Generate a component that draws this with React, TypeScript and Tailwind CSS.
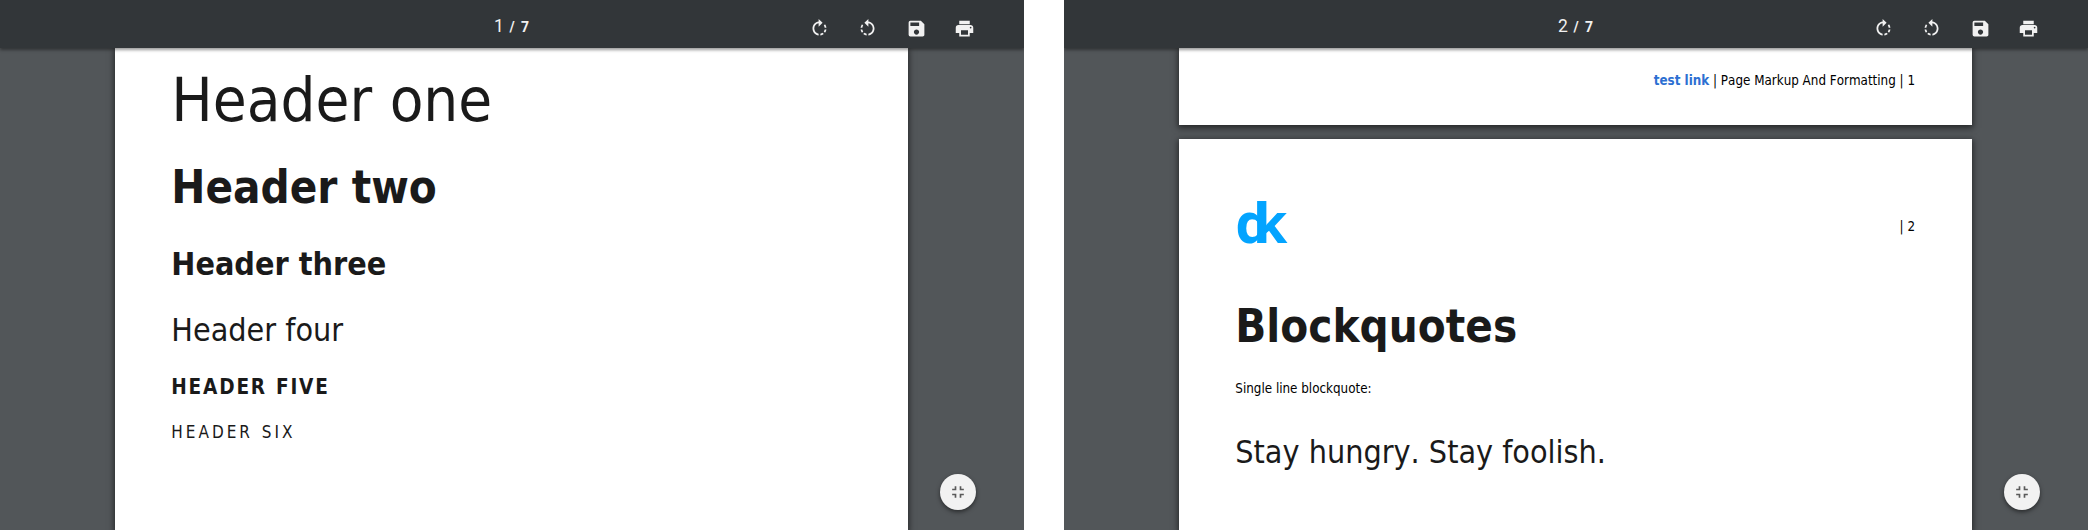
import type { ReactNode } from "react";
import { MdFullscreenExit, MdPrint, MdRotateLeft, MdRotateRight, MdSave } from "react-icons/md";

function Toolbar({ page }: { page: number }) {
  return (
    <header className="relative z-10 flex h-12 shrink-0 items-center bg-[#323639] font-[Roboto,sans-serif] text-[#f1f1f1] shadow-[0_2px_3px_rgba(0,0,0,0.4)]">
      <div className="ml-[494px] flex items-baseline pt-[4px]">
        <span className="w-[15.5px] text-[17.5px] leading-5">{page}</span>
        <span className="whitespace-pre text-[14px] leading-5 font-bold tracking-[1.4px]">/ 7</span>
      </div>
      <nav className="ml-auto mr-[49px] flex pt-[8px] text-[21px]">
        <MdRotateRight className="mr-[27px]" />
        <MdRotateLeft className="mr-[28px]" />
        <MdSave className="mr-[27px]" />
        <MdPrint />
      </nav>
    </header>
  );
}

function Viewer({ page, children }: { page: number; children: ReactNode }) {
  return (
    <section className="relative flex h-[530px] w-[1024px] flex-col overflow-hidden bg-[#525659]">
      <Toolbar page={page} />
      <main className="ml-[115px] flex w-[793px] flex-1 flex-col gap-[14px] font-['DejaVu_Sans_Condensed','DejaVu_Sans',sans-serif] text-[#1a1a1a] [font-kerning:none]">
        {children}
      </main>
      <button className="absolute top-[474px] left-[940px] flex size-9 items-center justify-center rounded-full bg-[#f2f2f2] text-[20px] text-[#5a5a5a] shadow-[0_2px_4px_rgba(0,0,0,0.5)]">
        <MdFullscreenExit />
      </button>
    </section>
  );
}

export default function App() {
  return (
    <div className="flex h-[530px] w-[2088px] gap-10 overflow-hidden bg-white">
      <Viewer page={1}>
        <article className="flex-1 bg-white px-[56.3px] pt-[16px] whitespace-nowrap shadow-[0_2px_6px_1px_rgba(0,0,0,0.55)]">
          <h1 className="text-[61.3px] leading-[72px]">Header one</h1>
          <h2 className="mt-[25px] text-[45.3px] leading-[54px] font-bold">Header two</h2>
          <h3 className="mt-[30px] text-[32px] leading-[38px] font-bold">Header three</h3>
          <h4 className="mt-[28px] text-[32px] leading-[38px]">Header four</h4>
          <h5 className="mt-[26px] text-[20.6px] leading-[24px] font-bold tracking-[1.8px] uppercase [word-spacing:0.8px]">Header five</h5>
          <h6 className="mt-[23px] text-[17px] leading-[20px] tracking-[3px] uppercase [word-spacing:1px]">Header six</h6>
        </article>
      </Viewer>
      <Viewer page={2}>
        <footer className="h-[77px] shrink-0 bg-white px-[57px] pt-[25px] text-right text-[13.3px] leading-[16px] whitespace-nowrap text-black shadow-[0_2px_6px_1px_rgba(0,0,0,0.55)]">
          <a className="font-bold text-[#2d6fd2]">test link</a> | Page Markup And Formatting | 1
        </footer>
        <article className="flex-1 bg-white pr-[57px] pl-[56.3px] whitespace-nowrap shadow-[0_2px_6px_1px_rgba(0,0,0,0.55)]">
          <div className="flex items-baseline justify-between pt-[46px]">
            <span className="font-['Open_Sans',sans-serif] text-[56px] leading-[72px] font-bold tracking-[-18px] text-[#03a4ff]">dk</span>
            <span className="relative -top-[12px] text-[13.3px] leading-[16px] text-black">| 2</span>
          </div>
          <h2 className="mt-[43px] text-[45.3px] leading-[54px] font-bold">Blockquotes</h2>
          <p className="mt-[27px] text-[13.3px] leading-[16px] text-black">Single line blockquote:</p>
          <blockquote className="mt-[36px] text-[32px] leading-[38px]">Stay hungry. Stay foolish.</blockquote>
        </article>
      </Viewer>
    </div>
  );
}
